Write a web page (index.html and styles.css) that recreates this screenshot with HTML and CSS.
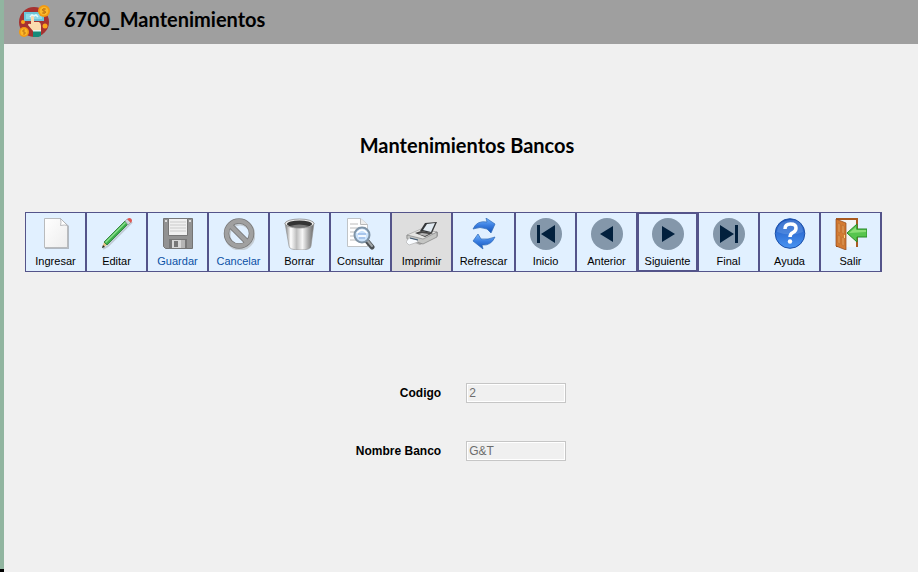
FILE: index.html
```html
<!DOCTYPE html>
<html lang="es">
<head>
<meta charset="utf-8">
<title>6700_Mantenimientos</title>
<link rel="stylesheet" href="styles.css">
</head>
<body>
<div class="window">
<header class="titlebar">
  <svg class="logo" viewBox="0 0 32 32" aria-hidden="true">
    <circle cx="16" cy="17" r="15" fill="#a63231"/>
    <path d="M6 7h20v9H6z" fill="#6cc5d8"/><path d="M8 9h16v5H8z" fill="#8fdbe6"/>
    <path d="M12 12l2-2 2 1 2-1 2 2" fill="none" stroke="#e4fbff" stroke-width="1.5"/>
    <path d="M13 12q1.500-2 3 0v5h5q2 1 2 4v5h-8l-5-6q0-2 3-1z" fill="#fbdcae"/>
    <path d="M15 26h8v5q-4 2-8 1z" fill="#168a79"/><path d="M15 25h8v1.500h-8z" fill="#e8f4ee"/>
    <circle cx="5" cy="17" r="2" fill="#f9a71a"/><circle cx="27" cy="21" r="2.500" fill="#f9a71a"/>
    <circle cx="26" cy="6" r="6" fill="#f39a12"/><circle cx="26" cy="6" r="4.300" fill="#fbb82a"/>
    <circle cx="6" cy="27" r="5" fill="#f39a12"/><circle cx="6" cy="27" r="3.500" fill="#fbb82a"/>
    <path d="M28 4h-3l-1 1 4 2-1 1h-3M26 3v6M7 25H5v2h2v2H5" fill="none" stroke="#b86b13" stroke-width=".8"/>
  </svg>
  <span class="app-name">6700_Mantenimientos</span>
</header>
<main>
  <h1>Mantenimientos Bancos</h1>
  <div class="toolbar" role="toolbar" aria-label="Acciones">
    <button type="button">
      <svg viewBox="0 0 32 32" aria-hidden="true">
        <defs><linearGradient id="paper" x2="1" y2="1"><stop stop-color="#fff"/><stop offset="1" stop-color="#ededed"/></linearGradient></defs>
        <path d="M5 2h17l7 6v23H5z" fill="#8b8d90" opacity=".55"/>
        <path d="M4.500 .5h16l7 7v22h-23z" fill="url(#paper)" stroke="#b9bbbd"/>
        <path d="M20.500 .5q1 4 0 7 4-1 7 0z" fill="#fff" stroke="#a9abad" stroke-width=".8"/>
      </svg>
      <span>Ingresar</span>
    </button>
    <button type="button">
      <svg viewBox="0 0 32 32" aria-hidden="true">
        <path d="M2 31l5-3L31 4" fill="none" stroke="#777" stroke-width="2" opacity=".3"/>
        <path d="M1 30l2-6 3 3z" fill="#e5c184"/><path d="M1 30l1-3 2 2z" fill="#252b25"/>
        <path d="M3 24L24 3l3 3L6 27z" fill="#3cae4b" stroke="#24732e" stroke-width=".8"/>
        <path d="M4 24L24 4l1 1L5 25z" fill="#8ce18d"/>
        <path d="M24 3l2-2 4 3-3 3z" fill="#cfd5da" stroke="#8d9499" stroke-width=".6"/>
        <path d="M26 1l2-1q3 0 3 3l-1 2z" fill="#df5550"/>
      </svg>
      <span>Editar</span>
    </button>
    <button type="button" class="inactive">
      <svg viewBox="0 0 32 32" aria-hidden="true">
        <path d="M1.500 .5h29v30h-27l-2-2z" fill="#929292" stroke="#747474"/>
        <path d="M6.500 .5h19v17h-19z" fill="#f0f0f0" stroke="#777"/>
        <path d="M8 4h16M8 7h16M8 10h16M8 13h16" stroke="#cacaca"/>
        <path d="M3 2h2v2H3zM27 2h2v2h-2z" fill="#ddd"/>
        <path d="M7 21h18v10H7z" fill="#777"/><path d="M10 22h13v8H10z" fill="#d7d7d7"/>
        <path d="M12 23h4v6h-4z" fill="#777"/><path d="M19 22h4v8h-4z" fill="#b5b5b5"/>
      </svg>
      <span>Guardar</span>
    </button>
    <button type="button" class="inactive">
      <svg viewBox="0 0 32 32" aria-hidden="true">
        <circle cx="17" cy="17" r="12.500" fill="none" stroke="#aaa" stroke-width="6" opacity=".5"/>
        <path d="M7 7l18 18" stroke="#777" stroke-width="6"/><circle cx="16" cy="15.500" r="12.500" fill="none" stroke="#787878" stroke-width="5.500"/>
        <path d="M7 7l18 18" stroke="#a0a0a0" stroke-width="4"/><circle cx="16" cy="15.500" r="12.500" fill="none" stroke="#a0a0a0" stroke-width="4"/>
      </svg>
      <span>Cancelar</span>
    </button>
    <button type="button">
      <svg viewBox="0 0 32 32" aria-hidden="true">
        <defs><linearGradient id="metal"><stop stop-color="#777"/><stop offset=".2" stop-color="#fff"/><stop offset=".4" stop-color="#bdbdbd"/><stop offset=".6" stop-color="#f7f7f7"/><stop offset=".8" stop-color="#aaa"/><stop offset="1" stop-color="#666"/></linearGradient></defs>
        <path d="M1 5l4 23q0 4 11 4t11-4l3-23z" fill="url(#metal)" stroke="#909090" stroke-width=".6"/>
        <ellipse cx="15.500" cy="5.500" rx="14.500" ry="4.500" fill="#eee" stroke="#777" stroke-width=".7"/>
        <ellipse cx="15.500" cy="6" rx="12.500" ry="3.500" fill="#343434"/>
        <path d="M6 8q9-3 19 0-9 3-19 0z" fill="#777"/>
      </svg>
      <span>Borrar</span>
    </button>
    <button type="button">
      <svg viewBox="0 0 32 32" aria-hidden="true">
        <path d="M2.500 .5h13l7 6v22h-20z" fill="#fff" stroke="#c0c4c7"/>
        <path d="M15.500 .5v6h7" fill="#eee" stroke="#bbb"/>
        <path d="M5 6h8M5 10h9M5 14h5M5 18h5M5 22h8" stroke="#bcbcbc"/>
        <path d="M22 23l5 6" stroke="#4b5053" stroke-width="5" stroke-linecap="round"/>
        <path d="M22 22l5 6" stroke="#a2a6a8" stroke-width="2" stroke-linecap="round"/>
        <circle cx="17" cy="17" r="7.500" fill="#cae2fb" stroke="#7e93a6" stroke-width="2"/>
        <path d="M12 15q5-6 10 0M13 18h8" fill="none" stroke="#fff" stroke-width="1.500"/><path d="M13 16h8M14 20h6" stroke="#86a9dc"/>
      </svg>
      <span>Consultar</span>
    </button>
    <button type="button" class="hovered">
      <svg viewBox="0 0 32 32" aria-hidden="true">
        <path d="M2 22l12 5 18-9v-4l-12-3-18 6z" fill="#777" opacity=".5"/>
        <path d="M1 17l14-6 16 3-14 9-16-3z" fill="#e5e5e3" stroke="#999" stroke-width=".6"/>
        <path d="M1 17l16 4 14-7v5l-14 7-16-5z" fill="#c4c5c3" stroke="#777" stroke-width=".6"/>
        <path d="M14 13l5-8 12-1-5 11z" fill="#343638"/><path d="M17 12l4-6 8-1-4 9z" fill="#e2ebf2"/>
        <path d="M9 15l6-2 12 2-8 4z" fill="#444"/><path d="M12 16l4-1 7 1-4 2z" fill="#b8b8b8"/>
        <path d="M3 20l8 2 1 2-9 3-3-3z" fill="#f9fcff" stroke="#aaa" stroke-width=".6"/><path d="M4 20l8 2" stroke="#38536d"/>
      </svg>
      <span>Imprimir</span>
    </button>
    <button type="button">
      <svg viewBox="0 0 32 32" aria-hidden="true">
        <defs><linearGradient id="arrow" x2="0" y2="1"><stop stop-color="#75b6ff"/><stop offset=".5" stop-color="#397de0"/><stop offset="1" stop-color="#1555b8"/></linearGradient></defs>
        <path d="M5 11Q9 2 19 4l-1-4 9 6-4 9-4-4q-7-3-14 0z" fill="url(#arrow)" stroke="#2c67b4" stroke-width=".7"/>
        <path d="M27 19q-4 9-13 8l1 4-10-8 5-7 3 5q7 1 14-2z" fill="url(#arrow)" stroke="#2c67b4" stroke-width=".7"/>
      </svg>
      <span>Refrescar</span>
    </button>
    <button type="button">
      <svg viewBox="0 0 32 32" aria-hidden="true"><circle cx="16" cy="16" r="16" fill="#8497aa"/><path d="M7 7h3v18H7zM25 7v18l-14-9z" fill="#02203d"/></svg>
      <span>Inicio</span>
    </button>
    <button type="button">
      <svg viewBox="0 0 32 32" aria-hidden="true"><circle cx="16" cy="16" r="16" fill="#8497aa"/><path d="M22 8v16L9 16z" fill="#02203d"/></svg>
      <span>Anterior</span>
    </button>
    <button type="button" class="selected">
      <svg viewBox="0 0 32 32" aria-hidden="true"><circle cx="16" cy="16" r="16" fill="#8497aa"/><path d="M10 8v16l13-8z" fill="#02203d"/></svg>
      <span>Siguiente</span>
    </button>
    <button type="button">
      <svg viewBox="0 0 32 32" aria-hidden="true"><circle cx="16" cy="16" r="16" fill="#8497aa"/><path d="M22 7h3v18h-3zM7 7v18l14-9z" fill="#02203d"/></svg>
      <span>Final</span>
    </button>
    <button type="button">
      <svg viewBox="0 0 32 32" aria-hidden="true">
        <defs><linearGradient id="help" x2="0" y2="1"><stop stop-color="#2057bd"/><stop offset=".45" stop-color="#2f6ed4"/><stop offset="1" stop-color="#4a96f3"/></linearGradient></defs>
        <circle cx="16" cy="15.500" r="14.800" fill="url(#help)" stroke="#1c50a8"/>
        <path d="M3 14Q4 3 16 2t13 12q-12 5-26 0z" fill="#8ab6ef" opacity=".3"/>
        <path d="M11 11q0-5 5.500-5t5.500 4q0 3-3 4.500-3 1.500-3 4.500" fill="none" stroke="#fff" stroke-width="3.500"/>
        <circle cx="16" cy="23.500" r="2.200" fill="#fff"/>
      </svg>
      <span>Ayuda</span>
    </button>
    <button type="button">
      <svg viewBox="0 0 32 32" aria-hidden="true">
        <path d="M1 0h22v29H1z" fill="#a85a20"/><path d="M3 2h18v27H3z" fill="#f2f4f5"/>
        <path d="M1 1l10 4v27L1 28z" fill="#d47b32" stroke="#8d461d" stroke-width=".7"/>
        <path d="M3 5l2 1v9l-2-1zM7 7l2 1v8l-2-1zM3 17l2 1v8l-2-1zM7 19l2 1v8l-2-1z" fill="#e69b55" stroke="#b46b30" stroke-width=".6"/>
        <path d="M9 17h1v3H9z" fill="#f5d77a"/>
        <path d="M12 15l10-9v5h10v8H22v5z" fill="#56c54d" stroke="#278926"/><path d="M14 15l7-6v3h10v2z" fill="#8ade76"/>
      </svg>
      <span>Salir</span>
    </button>
  </div>
  <form class="record">
    <label for="codigo">Codigo</label>
    <input id="codigo" type="text" value="2" disabled>
    <label for="nombre">Nombre Banco</label>
    <input id="nombre" type="text" value="G&amp;T" disabled>
  </form>
</main>
</div>
</body>
</html>
```
FILE: styles.css
```css
* {
  box-sizing: border-box;
}

body {
  margin: 0;
  background: linear-gradient(to top, #000 3px, #91b5a0 3px);
  color: #000;
  font-family: "Liberation Sans", Arial, sans-serif;
}

.window {
  min-height: 100vh;
  margin-left: 4px;
  background: #f0f0f0;
}

.titlebar {
  display: flex;
  align-items: center;
  gap: 14px;
  height: 44px;
  padding: 0 14px 4px;
  background: #9f9f9f;
}

.logo {
  width: 32px;
  height: 32px;
  margin-top: 2px;
}

.app-name,
h1 {
  margin: 0;
  font-family: "Century Gothic", Lato, sans-serif;
  font-size: 20px;
  line-height: 22px;
  font-weight: 700;
}

.app-name {
  padding-bottom: 2px;
}

h1 {
  padding: 90px 0 0 12px;
  text-align: center;
}

.toolbar {
  display: grid;
  grid-template-columns: repeat(7, 61fr) 63fr repeat(6, 61fr);
  margin: 56px 36px 0 21px;
  border-right: 1px solid #54548a;
}

.toolbar button {
  display: flex;
  flex-direction: column;
  align-items: center;
  gap: 4px;
  min-width: 0;
  height: 60px;
  margin: 0;
  padding: 5px 0 0;
  border: 1px solid #54548a;
  border-radius: 0;
  background: #e1f0ff;
  color: #000;
  font: inherit;
  font-size: 11px;
  line-height: 14px;
}

.toolbar svg {
  width: 32px;
  height: 32px;
}

.toolbar .inactive {
  color: #0b50a5;
}

.toolbar .hovered {
  background: #dedede;
}

.toolbar .selected {
  padding-top: 4px;
  border-width: 2px;
}

.record {
  display: grid;
  grid-template-columns: max-content 100px;
  justify-content: center;
  gap: 38px 25px;
  margin: 111px 0 0;
}

.record label {
  align-self: center;
  text-align: right;
  font-size: 12px;
  line-height: 20px;
  font-weight: 700;
}

.record input {
  width: 100%;
  height: 20px;
  margin: 0;
  padding: 0 2px;
  border: 1px solid #c6c6c6;
  border-radius: 0;
  box-shadow: inset 0 0 0 1px #fff;
  background: #f0f0f0;
  color: #6d6d6d;
  font: inherit;
  font-size: 12px;
}
```
